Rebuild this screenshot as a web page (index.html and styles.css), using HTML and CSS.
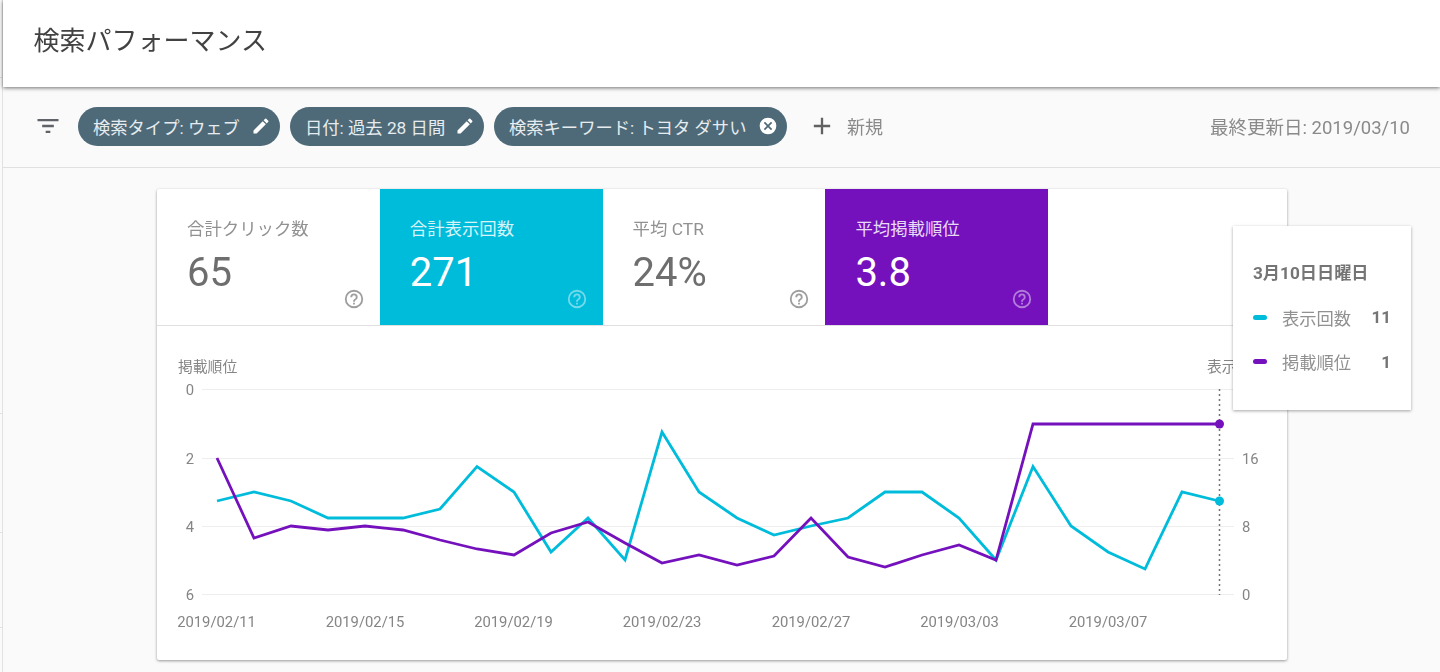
FILE: index.html
```html
<!DOCTYPE html>
<html lang="ja">
<head>
<meta charset="utf-8">
<title>検索パフォーマンス</title>
<link rel="stylesheet" href="styles.css">
</head>
<body>
<div class="page">
  <header class="topbar"><h1 class="title">検索パフォーマンス</h1></header>
  <div class="filters">
    <svg class="filter-icon" viewBox="0 0 24 24" width="28" height="28"><path d="M3 6h18v2H3zM7 11h10v2H7zM10 16h4v2h-4z"/></svg>
    <span class="chip chip-a">検索タイプ: ウェブ<svg class="chip-icon" viewBox="0 0 24 24" width="20" height="20"><path d="M3 17.25V21h3.75L17.81 9.94l-3.75-3.75L3 17.25zM20.71 7.04a1 1 0 0 0 0-1.41l-2.34-2.34a1 1 0 0 0-1.41 0l-1.83 1.83 3.75 3.75 1.83-1.83z"/></svg></span>
    <span class="chip chip-b">日付: 過去 28 日間<svg class="chip-icon" viewBox="0 0 24 24" width="20" height="20"><path d="M3 17.25V21h3.75L17.81 9.94l-3.75-3.75L3 17.25zM20.71 7.04a1 1 0 0 0 0-1.41l-2.34-2.34a1 1 0 0 0-1.41 0l-1.83 1.83 3.75 3.75 1.83-1.83z"/></svg></span>
    <span class="chip chip-c">検索キーワード: トヨタ ダサい<svg class="chip-icon" viewBox="0 0 24 24" width="20" height="20"><path d="M12 2a10 10 0 1 0 0 20 10 10 0 0 0 0-20zm5 13.6L15.6 17 12 13.4 8.4 17 7 15.6 10.6 12 7 8.4 8.4 7 12 10.6 15.6 7 17 8.4 13.4 12 17 15.6z"/></svg></span>
    <span class="add"><svg class="add-icon" viewBox="0 0 24 24" width="28" height="28"><path d="M19 13h-6v6h-2v-6H5v-2h6V5h2v6h6v2z"/></svg>新規</span>
    <span class="updated">最終更新日: 2019/03/10</span>
  </div>
  <main class="content">
    <section class="card">
      <div class="tiles">
        <div class="tile">
          <div class="tile-label">合計クリック数</div>
          <div class="tile-value">65</div>
          <svg class="help" viewBox="0 0 24 24" width="22" height="22"><path d="M11 18h2v-2h-2v2zm1-16a10 10 0 1 0 0 20 10 10 0 0 0 0-20zm0 18a8 8 0 1 1 0-16 8 8 0 0 1 0 16zm0-14a4 4 0 0 0-4 4h2a2 2 0 1 1 4 0c0 2-3 1.75-3 5h2c0-2.25 3-2.5 3-5a4 4 0 0 0-4-4z"/></svg>
        </div>
        <div class="tile tile-teal">
          <div class="tile-label">合計表示回数</div>
          <div class="tile-value">271</div>
          <svg class="help" viewBox="0 0 24 24" width="22" height="22"><path d="M11 18h2v-2h-2v2zm1-16a10 10 0 1 0 0 20 10 10 0 0 0 0-20zm0 18a8 8 0 1 1 0-16 8 8 0 0 1 0 16zm0-14a4 4 0 0 0-4 4h2a2 2 0 1 1 4 0c0 2-3 1.75-3 5h2c0-2.25 3-2.5 3-5a4 4 0 0 0-4-4z"/></svg>
        </div>
        <div class="tile">
          <div class="tile-label">平均 CTR</div>
          <div class="tile-value">24%</div>
          <svg class="help" viewBox="0 0 24 24" width="22" height="22"><path d="M11 18h2v-2h-2v2zm1-16a10 10 0 1 0 0 20 10 10 0 0 0 0-20zm0 18a8 8 0 1 1 0-16 8 8 0 0 1 0 16zm0-14a4 4 0 0 0-4 4h2a2 2 0 1 1 4 0c0 2-3 1.75-3 5h2c0-2.25 3-2.5 3-5a4 4 0 0 0-4-4z"/></svg>
        </div>
        <div class="tile tile-purple">
          <div class="tile-label">平均掲載順位</div>
          <div class="tile-value">3.8</div>
          <svg class="help" viewBox="0 0 24 24" width="22" height="22"><path d="M11 18h2v-2h-2v2zm1-16a10 10 0 1 0 0 20 10 10 0 0 0 0-20zm0 18a8 8 0 1 1 0-16 8 8 0 0 1 0 16zm0-14a4 4 0 0 0-4 4h2a2 2 0 1 1 4 0c0 2-3 1.75-3 5h2c0-2.25 3-2.5 3-5a4 4 0 0 0-4-4z"/></svg>
        </div>
      </div>
      <svg class="chart" viewBox="157 326 1130 334" width="1130" height="334">
        <g class="grid">
          <line x1="202" y1="389.500" x2="1234" y2="389.500"/>
          <line x1="202" y1="458.500" x2="1234" y2="458.500"/>
          <line x1="202" y1="526.500" x2="1234" y2="526.500"/>
          <line x1="202" y1="594.500" x2="1234" y2="594.500"/>
        </g>
        <g class="axis-label">
          <text x="178" y="372">掲載順位</text>
          <text x="1207" y="372">表示回数</text>
          <text x="194" y="395" text-anchor="end">0</text>
          <text x="194" y="464" text-anchor="end">2</text>
          <text x="194" y="532" text-anchor="end">4</text>
          <text x="194" y="600" text-anchor="end">6</text>
          <text x="1242" y="464">16</text>
          <text x="1242" y="532">8</text>
          <text x="1242" y="600">0</text>
          <text x="216.500" y="627" text-anchor="middle">2019/02/11</text>
          <text x="365" y="627" text-anchor="middle">2019/02/15</text>
          <text x="513.500" y="627" text-anchor="middle">2019/02/19</text>
          <text x="662" y="627" text-anchor="middle">2019/02/23</text>
          <text x="811" y="627" text-anchor="middle">2019/02/27</text>
          <text x="959.500" y="627" text-anchor="middle">2019/03/03</text>
          <text x="1108" y="627" text-anchor="middle">2019/03/07</text>
        </g>
        <line class="cursor" x1="1219.500" y1="389" x2="1219.500" y2="595"/>
        <polyline class="line line-teal" points="217,501 254,492 291,501 328,518 365,518 403,518 440,509 477,466.500 514,492 551,552 588,518 625,560 662,432 699,492 737,518 774,535 811,526 848,518 885,492 922,492 959,518 996,560 1033,466.500 1071,526 1108,552 1145,569 1182,492 1219,501"/>
        <polyline class="line line-purple" points="217,458 254,538 291,526 328,530 365,526 403,530 440,540 477,549 514,555 551,533 588,522 625,543 662,563 699,555 737,565 774,556 811,518 848,557 885,567 922,555 959,545 996,560 1033,424 1071,424 1108,424 1145,424 1182,424 1219,424"/>
        <circle class="dot-teal" cx="1219.500" cy="501" r="4.500"/>
        <circle class="dot-purple" cx="1219.500" cy="424" r="4.500"/>
      </svg>
      <aside class="tooltip">
        <div class="tooltip-date">3月10日日曜日</div>
        <div class="tooltip-row"><span class="swatch swatch-teal"></span><span class="tooltip-name">表示回数</span><span class="tooltip-value">11</span></div>
        <div class="tooltip-row"><span class="swatch swatch-purple"></span><span class="tooltip-name">掲載順位</span><span class="tooltip-value">1</span></div>
      </aside>
    </section>
  </main>
</div>
</body>
</html>
```
FILE: styles.css
```css
* { box-sizing: border-box; }
html, body { margin: 0; padding: 0; height: 672px; overflow: hidden; }
body {
  background: #fafafa;
  font-family: Roboto, "Noto Sans CJK JP", sans-serif;
  color: #757575;
}
.page {
  position: relative;
  padding-left: 3px;
  height: 672px;
  display: flex;
  flex-direction: column;
  filter: blur(.35px);
}
.page::before {
  content: "";
  position: absolute;
  left: 0;
  top: 0;
  width: 3px;
  height: 672px;
  background:
    linear-gradient(#e2e2e2, #e2e2e2) 0 77px / 3px 1px no-repeat,
    linear-gradient(#e2e2e2, #e2e2e2) 0 413px / 3px 1px no-repeat,
    linear-gradient(#e2e2e2, #e2e2e2) 0 532px / 3px 1px no-repeat,
    linear-gradient(#e2e2e2, #e2e2e2) 0 627px / 3px 1px no-repeat,
    linear-gradient(#e2e2e2, #e2e2e2) 2px 0 / 1px 672px no-repeat;
}
.topbar {
  height: 87px;
  flex: none;
  background: #fff;
  display: flex;
  align-items: center;
  padding: 0 0 6px 30.500px;
  box-shadow: 0 1px 4px rgba(0,0,0,.55);
  position: relative;
  z-index: 1;
}
.title { margin: 0; font-size: 26px; font-weight: 400; color: #424242; line-height: 1; }
.filters {
  height: 81px;
  flex: none;
  display: flex;
  align-items: center;
  padding: 0 30px 2px 31px;
  border-bottom: 1px solid #e0e0e0;
}
.filter-icon { fill: #5f6368; margin-right: 16px; flex: none; }
.chip {
  height: 39px;
  border-radius: 20px;
  background: #4e6a78;
  color: #e6ecef;
  font-size: 17.300px;
  display: inline-flex;
  align-items: center;
  justify-content: space-between;
  padding: 0 9px 0 15px;
  margin-right: 10px;
  white-space: nowrap;
}
.chip-a { width: 202px; }
.chip-b { width: 194px; }
.chip-c { width: 293px; }
.chip-icon { fill: #fff; flex: none; }
.add { display: inline-flex; align-items: center; gap: 11px; margin-left: 11px; font-size: 18px; color: #8a8a8a; }
.add-icon { fill: #616161; }
.updated { margin-left: auto; font-size: 18.500px; color: #8a8a8a; }
.content { flex: 1; padding: 21px 0 0 154px; }
.card {
  position: relative;
  width: 1130px;
  height: 471px;
  background: #fff;
  border-radius: 2px;
  box-shadow: 0 1px 3px rgba(0,0,0,.4);
}
.tiles { display: flex; height: 137px; border-bottom: 1px solid #e0e0e0; }
.tile {
  position: relative;
  width: 222.800px;
  height: 136px;
  padding: 29px 0 0 30px;
  color: #757575;
}
.tile-label { font-size: 17.400px; line-height: 22px; color: #919191; }
.tile-value { font-size: 40px; line-height: 44px; margin-top: 11px; color: #6e6e6e; font-weight: 400; }
.tile-teal { background: #00bcdb; }
.tile-purple { background: #7511bc; }
.tile-teal .tile-label, .tile-purple .tile-label { color: rgba(255,255,255,.85); }
.tile-teal .tile-value, .tile-purple .tile-value { color: #fff; }
.help { position: absolute; right: 15px; bottom: 15px; fill: #9e9e9e; }
.tile-teal .help, .tile-purple .help { fill: rgba(255,255,255,.45); }
.chart { display: block; }
.grid line { stroke: #eeeeee; stroke-width: 1; }
.axis-label text { font-size: 14.800px; fill: #858585; }
.cursor { stroke: #757575; stroke-width: 1.500; stroke-dasharray: 2 3; }
.line { fill: none; stroke-width: 2.800; stroke-linejoin: miter; }
.line-teal { stroke: #00bcdb; }
.line-purple { stroke: #7511bc; }
.dot-teal { fill: #00bcdb; }
.dot-purple { fill: #7511bc; }
.tooltip {
  position: absolute;
  left: 1076px;
  top: 37px;
  width: 178px;
  height: 184px;
  background: #fff;
  box-shadow: 0 1px 3px rgba(0,0,0,.35);
  padding: 37px 20px 0;
}
.tooltip-date { font-size: 17.200px; font-weight: 700; line-height: 20px; color: #757575; }
.tooltip-row { display: flex; align-items: center; height: 44.500px; font-size: 17.300px; color: #919191; }
.tooltip-date + .tooltip-row { margin-top: 12px; }
.swatch { width: 14px; height: 5px; border-radius: 3px; margin-right: 15px; flex: none; }
.swatch-teal { background: #00bcdb; }
.swatch-purple { background: #7511bc; }
.tooltip-name { flex: 1; }
.tooltip-value { font-weight: 700; font-size: 17px; color: #757575; }
```
